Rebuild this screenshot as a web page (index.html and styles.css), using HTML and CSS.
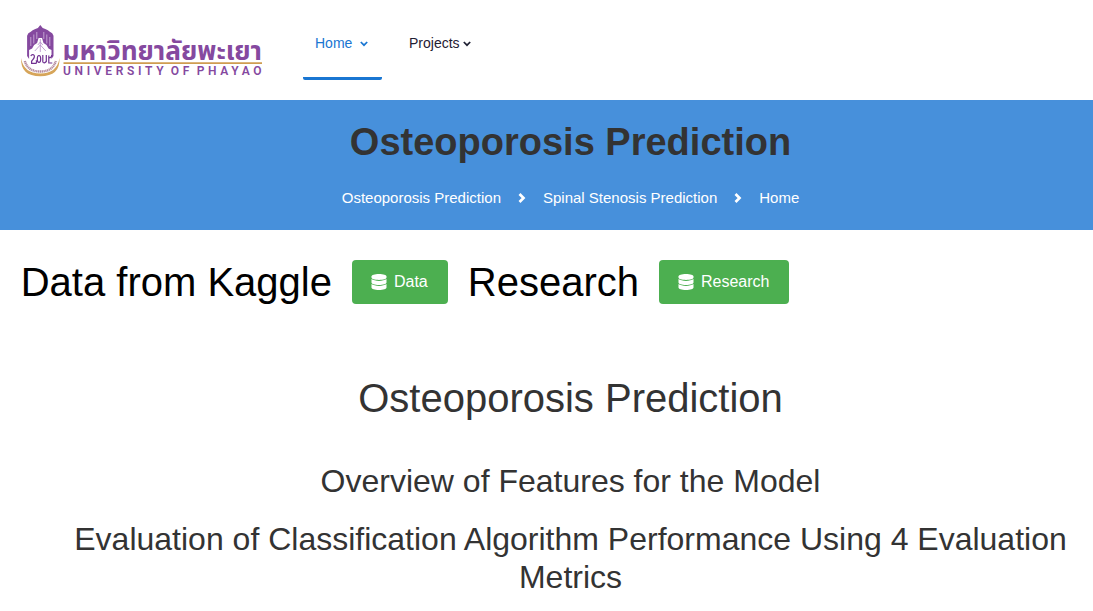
FILE: index.html
```html
<!DOCTYPE html>
<html lang="en">
<head>
<meta charset="utf-8">
<title>Osteoporosis Prediction</title>
<link rel="stylesheet" href="styles.css">
</head>
<body>
<svg class="defs" width="0" height="0" aria-hidden="true">
  <symbol id="db" viewBox="0 0 16 16">
    <path d="M8 0C3.600 0 .5 1 .5 2.400v1.200C.5 5 3.600 6 8 6s7.500-1 7.500-2.400V2.400C15.500 1 12.400 0 8 0z"/>
    <path d="M.5 5.100C2 6.300 5 6.900 8 6.900s6-.6 7.500-1.800v3.300c0 1.500-3.100 2.500-7.500 2.500S.5 9.900.5 8.400z"/>
    <path d="M.5 10.100c1.500 1.200 4.500 1.800 7.500 1.800s6-.6 7.500-1.800v3.400C15.500 15 12.400 16 8 16S.5 15 .5 13.500z"/>
  </symbol>
</svg>
<header class="header">
  <a class="brand" href="#">
    <svg width="244" height="54" viewBox="20 24 244 54">
      <g transform="translate(1.800 0)">
      <path fill="#85499f" d="M38.500 25q1.500 3 5 4q3 1.200 4.500 2.800q3 1.200 3.700 4V56l-2 3V50l-3-1.500l-2-3.500l-3-2l-1.500-5h-3.400l-1.500 5l-3 2l-2 3.500l-3 1.500v9l-2-3V35.800q.700-2.800 3.700-4q1.500-1.600 4.500-2.800q3.500-1 5-4z"/>
      <path fill="none" stroke="#dbc6e5" stroke-width=".7" d="M29 37v9M32 34.500v9M35 32v7M42 32v7M45 34.500v9M48 37v9"/>
      <path fill="none" stroke="#b48bc6" stroke-width=".8" d="M38.500 39v13M36 45l2.500-3l2.500 3M33 51l5.500-6l5.500 6"/>
      <path fill="#d6a55a" d="M19.300 58q2.500 15.500 19.200 15.500T57.700 58q.8 18.200-19.200 18.200T19.300 58z"/>
      <path fill="none" stroke="#b58c9f" stroke-width="2.400" stroke-dasharray="1.300 .5" d="M23 61q3 10.500 15.500 10.500T54 61"/>
      <g fill="none" stroke="#713191" stroke-width="1.200">
        <path d="M29 56q1-2 2.700-1.200q2 1.500-.4 4.500q-2 1.500-1.500 4h4.500q1-1.200 0-3"/>
        <ellipse cx="37.200" cy="59" rx="1.700" ry="3.500"/>
        <path d="M41 55v7q1.300 2 3.500-.5V55M47 55.500v7.500h3.500M47 58q3 0 3-3"/>
      </g>
      </g>
      <text class="brand-thai" x="62.500" y="59.500" textLength="199.500" lengthAdjust="spacingAndGlyphs">มหาวิทยาลัยพะเยา</text>
      <path fill="#cf9d50" d="M63.500 62.300H262V64H63.500z"/>
      <text class="brand-en" x="63" y="75.300" textLength="198.500">UNIVERSITY OF PHAYAO</text>
    </svg>
  </a>
  <nav class="nav">
    <a class="nav-link active" href="#">Home<svg class="caret" viewBox="0 0 8 6"><path d="M.8 1l3.200 3.200L7.200 1"/></svg></a>
    <a class="nav-link" href="#">Projects<svg class="caret" viewBox="0 0 8 6"><path d="M.8 1l3.200 3.200L7.200 1"/></svg></a>
  </nav>
</header>
<section class="banner">
  <h1>Osteoporosis Prediction</h1>
  <div class="crumbs">
    <a href="#">Osteoporosis Prediction</a>
    <svg class="sep" viewBox="0 0 8 10"><path d="M1.500 1l4 4l-4 4"/></svg>
    <a href="#">Spinal Stenosis Prediction</a>
    <svg class="sep" viewBox="0 0 8 10"><path d="M1.500 1l4 4l-4 4"/></svg>
    <a href="#">Home</a>
  </div>
</section>
<main class="content">
  <div class="sources">
    <span>Data from Kaggle</span>
    <a class="button" href="#"><svg><use href="#db"/></svg>Data</a>
    <span>Research</span>
    <a class="button" href="#"><svg><use href="#db"/></svg>Research</a>
  </div>
  <h2>Osteoporosis Prediction</h2>
  <h3>Overview of Features for the Model</h3>
  <h3>Evaluation of Classification Algorithm Performance Using 4 Evaluation Metrics</h3>
</main>
</body>
</html>
```
FILE: styles.css
```css
* { box-sizing: border-box; }
html { overflow: hidden; }
body {
  margin: 0;
  width: 1141px;
  height: 611px;
  overflow: hidden;
  background: #fff;
  color: #333;
  font-family: "Liberation Sans", Arial, sans-serif;
}
a { color: inherit; text-decoration: none; }
h1, h2, h3 { margin: 0; }
.defs { display: block; }
.header { display: flex; height: 100px; padding-left: 20px; }
.brand { height: 80px; padding-top: 24px; }
.brand svg { display: block; }
.brand-thai { fill: #85499f; font: bold 26px "Noto Sans Thai", "Noto Sans", "DejaVu Sans", sans-serif; }
.brand-en { fill: #85499f; font: 600 12px Roboto, "Liberation Sans", sans-serif; word-spacing: -3px; }
.nav { display: flex; gap: 15px; margin-left: 39px; height: 80px; }
.nav-link {
  display: flex;
  padding: 35px 12px 0;
  font-size: 14px;
  line-height: 16px;
  color: #1f2033;
  border-bottom: 3px solid transparent;
  border-radius: 2px;
}
.active { color: #1976d2; width: 79px; border-bottom-color: #1976d2; }
.caret { width: 8px; height: 6px; margin: 6px 0 0 3px; fill: none; stroke: currentColor; stroke-width: 1.700; }
.active .caret { margin-left: 8px; }
.banner { height: 130px; padding-top: 20px; background: #4790db; text-align: center; }
.banner h1 { font-size: 38px; line-height: 44px; color: #333; }
.crumbs { display: flex; justify-content: center; align-items: center; margin-top: 25px; font-size: 15px; line-height: 18px; color: #fff; }
.sep { width: 8px; height: 10px; margin: 0 17px; fill: none; stroke: #fff; stroke-width: 2.700; }
.content { text-align: center; }
.sources { display: flex; align-items: center; gap: 20px; height: 44px; margin: 30px 0 0 20.700px; font-size: 40px; color: #000; }
.button {
  display: flex;
  align-items: center;
  gap: 7px;
  height: 44px;
  padding: 0 20px 0 19px;
  border-radius: 4px;
  background: #4caf50;
  color: #fff;
  font-size: 16px;
}
.button svg { width: 16px; height: 16px; margin-top: -1px; fill: #fff; }
h2 { margin-top: 70px; font-size: 40px; font-weight: 400; line-height: 48px; }
h3 { padding: 0 40px; font-size: 32px; font-weight: 400; line-height: 38px; margin-top: 20px; }
h2 + h3 { margin-top: 40px; }
```
